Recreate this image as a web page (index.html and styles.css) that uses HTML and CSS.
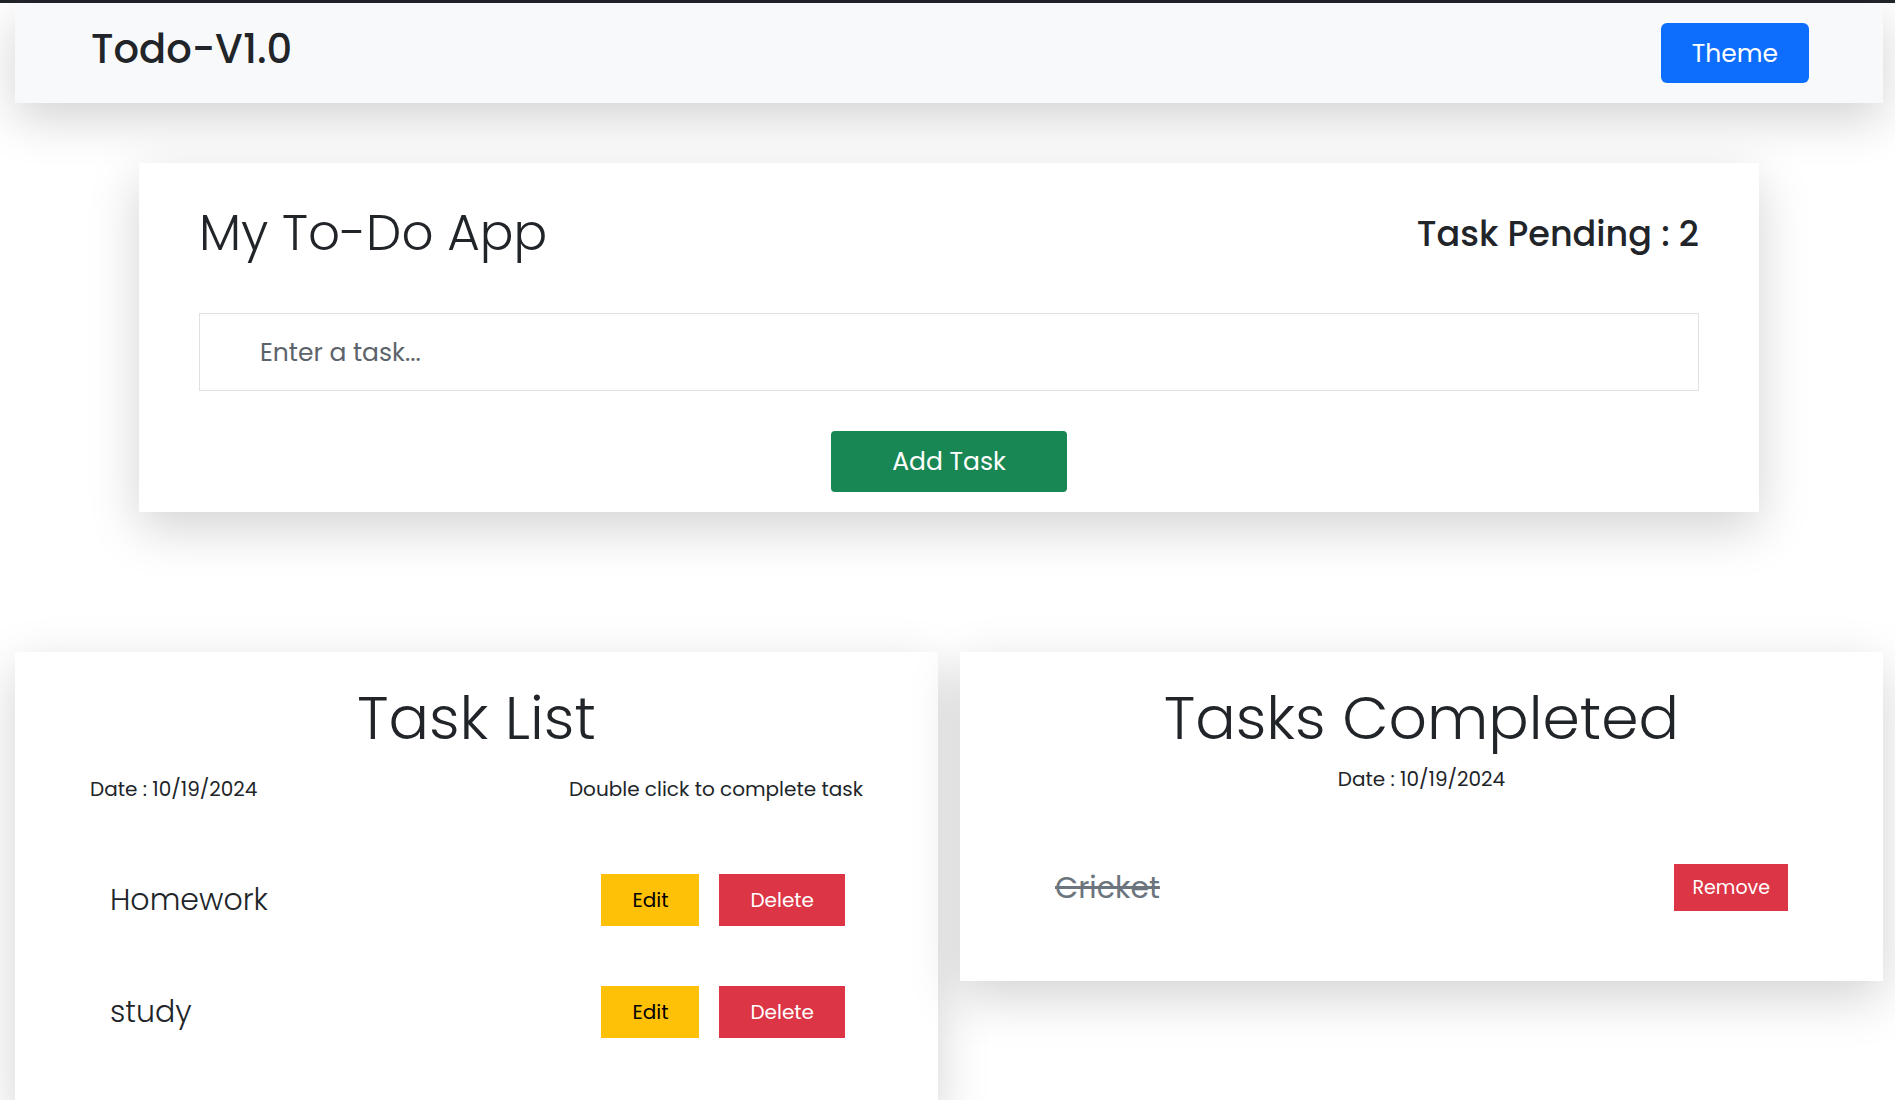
FILE: index.html
```html
<!DOCTYPE html>
<html lang="en">
<head>
<meta charset="utf-8">
<title>Todo-V1.0</title>
<link rel="stylesheet" href="styles.css">
</head>
<body>
<div class="topline"></div>
<div class="page">
  <nav class="navbar">
    <h1 class="brand">Todo-V1.0</h1>
    <button class="btn btn-theme">Theme</button>
  </nav>

  <section class="main-card">
    <div class="main-head">
      <h2 class="app-title">My To-Do App</h2>
      <div class="pending">Task Pending : 2</div>
    </div>
    <input class="task-input" type="text" placeholder="Enter a task...">
    <div class="add-wrap">
      <button class="btn btn-add">Add Task</button>
    </div>
  </section>

  <div class="lists">
    <section class="list-card">
      <h2 class="list-title">Task List</h2>
      <div class="list-meta">
        <span>Date : 10/19/2024</span>
        <span>Double click to complete task</span>
      </div>
      <ul class="items">
        <li class="item">
          <span class="item-text">Homework</span>
          <span class="item-actions">
            <button class="btn btn-edit">Edit</button>
            <button class="btn btn-delete">Delete</button>
          </span>
        </li>
        <li class="item">
          <span class="item-text">study</span>
          <span class="item-actions">
            <button class="btn btn-edit">Edit</button>
            <button class="btn btn-delete">Delete</button>
          </span>
        </li>
      </ul>
    </section>

    <section class="list-card done-card">
      <h2 class="list-title">Tasks Completed</h2>
      <div class="done-date">Date : 10/19/2024</div>
      <ul class="items done-items">
        <li class="item item-done">
          <span class="item-text done-text">Cricket</span>
          <button class="btn btn-remove">Remove</button>
        </li>
      </ul>
    </section>
  </div>
</div>
</body>
</html>
```

FILE: styles.css
```css
* { box-sizing: border-box; }

body {
  margin: 0;
  background: #fff;
  color: #212529;
  font-family: "Poppins", "Inter", "Noto Sans", sans-serif;
  font-size: 16px;
}

.topline {
  height: 3px;
  background: #212529;
}

.page {
  padding: 0 12px 0 15px;
}

.navbar {
  height: 100px;
  background: #f8f9fa;
  box-shadow: 0 16px 48px rgba(0, 0, 0, 0.175);
  display: flex;
  justify-content: space-between;
  align-items: flex-start;
  padding: 20px 74px 20px 76px;
}

.brand {
  margin: 2px 0 0;
  font-size: 40px;
  font-weight: 500;
  line-height: 1.2;
}

.btn {
  border: 0;
  font-family: inherit;
  cursor: pointer;
  line-height: 1;
}

.btn-theme {
  height: 60px;
  padding: 0 31px;
  background: #0d6efd;
  color: #fff;
  font-size: 25px;
  border-radius: 6px;
}

.main-card {
  width: 1620px;
  margin: 60px auto 0;
  background: #fff;
  box-shadow: 0 16px 48px rgba(0, 0, 0, 0.175);
  padding: 40px 60px 20px;
}

.main-head {
  display: flex;
  justify-content: space-between;
  align-items: center;
  height: 60px;
}

.app-title {
  margin: 0;
  font-size: 50px;
  font-weight: 300;
  line-height: 1.2;
}

.pending {
  font-size: 35px;
  font-weight: 500;
}

.task-input {
  display: block;
  width: 100%;
  height: 78px;
  margin-top: 50px;
  border: 1px solid #dee2e6;
  padding: 1px 60px 0;
  font-family: inherit;
  font-size: 25px;
  color: #212529;
  outline: none;
}

.task-input::placeholder {
  color: #5c636a;
}

.add-wrap {
  display: flex;
  justify-content: center;
  margin-top: 40px;
}

.btn-add {
  width: 236px;
  height: 61px;
  background: #198754;
  color: #fff;
  font-size: 25px;
  border-radius: 4px;
}

.lists {
  display: grid;
  grid-template-columns: 1fr 1fr;
  align-items: start;
  gap: 22px;
  margin-top: 140px;
}

.list-card {
  background: #fff;
  box-shadow: 0 16px 48px rgba(0, 0, 0, 0.175);
  padding: 31px 0 70px;
}

.list-title {
  margin: 0;
  text-align: center;
  font-size: 60px;
  font-weight: 300;
  line-height: 70px;
}

.list-meta {
  display: flex;
  justify-content: space-between;
  padding: 0 75px;
  margin-top: 21px;
  font-size: 20px;
  line-height: 30px;
}

.done-date {
  text-align: center;
  margin-top: 11px;
  font-size: 20px;
  line-height: 30px;
}

.items {
  list-style: none;
  margin: 70px 0 0;
  padding: 0 93px 0 95px;
  display: flex;
  flex-direction: column;
  gap: 60px;
}

.done-items {
  padding: 0 95px;
}

.item {
  display: flex;
  justify-content: space-between;
  align-items: center;
  height: 52px;
}

.item-done {
  height: 47px;
}

.item-text {
  font-size: 30px;
  font-weight: 300;
}

.done-text {
  color: #6c757d;
  text-decoration: line-through;
  font-weight: 400;
}

.item-actions {
  display: flex;
  gap: 20px;
}

.btn-edit,
.btn-delete {
  height: 52px;
  padding: 0 31px;
  font-size: 20px;
}

.btn-edit {
  background: #ffc107;
  color: #000;
}

.btn-delete {
  background: #dc3545;
  color: #fff;
}

.btn-remove {
  height: 47px;
  padding: 0 18px;
  background: #dc3545;
  color: #fff;
  font-size: 19px;
}
```
